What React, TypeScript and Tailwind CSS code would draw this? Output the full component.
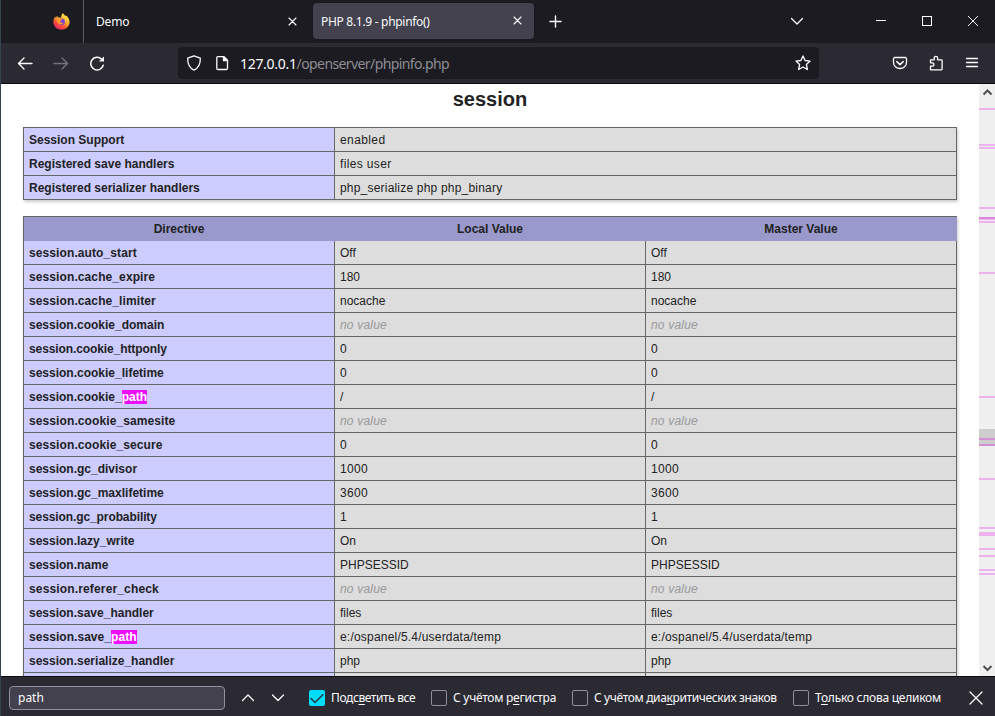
import type { ReactNode } from "react";

const uiFont = "font-['Noto_Sans','Open_Sans',sans-serif]";

const wide = "tracking-[0.2px]";
const tight = "tracking-[-0.1px]";
const slight = "tracking-[0.1px]";

const supportRows: [string, string, string, string][] = [
  ["Session Support", "enabled", "", "tracking-[0.4px]"],
  ["Registered save handlers", "files user", "", "tracking-[0.35px]"],
  ["Registered serializer handlers", "php_serialize php php_binary", "", wide],
];

const directives: [string, string | null, string, string][] = [
  ["session.auto_start", "Off", slight, ""],
  ["session.cache_expire", "180", slight, ""],
  ["session.cache_limiter", "nocache", slight, ""],
  ["session.cookie_domain", null, "", wide],
  ["session.cookie_httponly", "0", tight, ""],
  ["session.cookie_lifetime", "0", "", ""],
  ["session.cookie_path", "/", "", ""],
  ["session.cookie_samesite", null, slight, wide],
  ["session.cookie_secure", "0", slight, ""],
  ["session.gc_divisor", "1000", "", "tracking-[0.3px]"],
  ["session.gc_maxlifetime", "3600", "", "tracking-[0.3px]"],
  ["session.gc_probability", "1", tight, ""],
  ["session.lazy_write", "On", "", ""],
  ["session.name", "PHPSESSID", "", ""],
  ["session.referer_check", null, "tracking-[0.15px]", wide],
  ["session.save_handler", "files", "", ""],
  ["session.save_path", "e:/ospanel/5.4/userdata/temp", "tracking-[0.05px]", wide],
  ["session.serialize_handler", "php", "", ""],
];

// Top offset, height and colour of each search hit on the scrollbar track.
const hits = [
  { top: 24, h: 2, c: "#edb1ed" },
  { top: 60, h: 2, c: "#edb1ed" },
  { top: 63, h: 2, c: "#edb1ed" },
  { top: 123, h: 2, c: "#edb1ed" },
  { top: 133, h: 2, c: "#dc86dc" },
  { top: 135, h: 1, c: "#edb1ed" },
  { top: 137, h: 2, c: "#edb1ed" },
  { top: 188, h: 2, c: "#edb1ed" },
  { top: 312, h: 2, c: "#edb1ed" },
  { top: 354, h: 2, c: "#d38fd3" },
  { top: 360, h: 2, c: "#d38fd3" },
  { top: 394, h: 2, c: "#edb1ed" },
  { top: 443, h: 2, c: "#edb1ed" },
  { top: 448, h: 4, c: "#edb1ed" },
  { top: 464, h: 2, c: "#edb1ed" },
  { top: 471, h: 2, c: "#edb1ed" },
  { top: 485, h: 2, c: "#edb1ed" },
  { top: 489, h: 2, c: "#edb1ed" },
];

function Icon({ children, size = 16, className = "", w = 1.3 }: { children: ReactNode; size?: number; className?: string; w?: number }) {
  return (
    <svg width={size} height={size} viewBox={`0 0 ${size} ${size}`} fill="none" stroke="currentColor" strokeWidth={w} strokeLinecap="round" strokeLinejoin="round" className={`block shrink-0 ${className}`}>
      {children}
    </svg>
  );
}

function Firefox() {
  return (
    <svg width="17" height="17" viewBox="0 0 17 17" className="block shrink-0">
      <defs>
        <linearGradient id="flame" x1="0.85" y1="0.05" x2="0.25" y2="1">
          <stop offset="0" stopColor="#fff24a" />
          <stop offset="0.4" stopColor="#ffb02e" />
          <stop offset="0.7" stopColor="#ff5036" />
          <stop offset="1" stopColor="#e8246d" />
        </linearGradient>
      </defs>
      <path d="M9.700.3c1.500.9 2.200 2 2.500 3 .3-.2.4-.7.4-1.100C15 3.800 16.600 6.400 16.600 9c0 4.300-3.600 7.700-8.100 7.700S.4 13.300.4 9c0-2.300.8-4.300 2-5.500 0 .5.100.9.400 1.300.4-.8 1-1.500 1.700-1.900 0 .8.400 1.400 1 1.700 1.100-.2 2-.1 2.700.2C8 3.400 8.500 1.500 9.700.3z" fill="url(#flame)" />
      <circle cx="8.600" cy="8.700" r="3.300" fill="#7a43d4" />
      <path d="M3 5.800c1.500-.8 3.100-.6 4.300.3.700.2 1.600.3 2 .5-.2.800-1.500 1.100-2.100 1.500.1 1.600 1.500 2.300 3.200 1.500-.7 1.700-2.300 2.300-3.900 1.700C4.700 10.600 4 9 4.200 7.600z" fill="#ff9a30" />
    </svg>
  );
}

const Cross = ({ s }: { s: number }) => <path d={`M1 1 L${s - 1} ${s - 1} M${s - 1} 1 L1 ${s - 1}`} />;

function TabStrip() {
  return (
    <div className="flex h-[43px] w-full shrink-0 items-center bg-[#1c1b22]">
      <div className="flex h-full w-[83px] shrink-0 items-center justify-end border-r border-[#5b5a63] pr-[13px]"><Firefox /></div>
      <div className="flex w-[229px] shrink-0 items-center justify-between pr-4 pl-3 text-xs">
        <span className="tracking-[-0.2px]">Demo</span>
        <Icon size={9} w={1.1}><Cross s={9} /></Icon>
      </div>
      <div className="mt-[-2px] flex h-9 w-[221px] shrink-0 items-center justify-between rounded bg-[#42414d] pr-3 pl-2 text-xs shadow-[0_0_2px_#0006]">
        <span className="pt-[3px] tracking-[-0.3px] whitespace-nowrap">PHP 8.1.9 - phpinfo()</span>
        <Icon size={9} w={1.1}><Cross s={9} /></Icon>
      </div>
      <Icon size={13} w={1.4} className="ml-[15px]"><path d="M6.500 1v11M1 6.500h11" /></Icon>
      <div className="flex-1" />
      <Icon size={14} w={1.3} className="mt-[-2px] mr-[72px]"><path d="M1.500 4.500 7 10l5.500-5.500" /></Icon>
      <div className="mt-[-2px] mr-[36px] h-px w-[10px] bg-white" />
      <div className="mt-[-1px] mr-[36px] h-[10px] w-[10px] border border-white" />
      <Icon size={10} w={1} className="mt-[-1px] mr-[17px]"><path d="M0 0 10 10M10 0 0 10" /></Icon>
    </div>
  );
}

function NavBar() {
  return (
    <div className="flex h-[41px] w-full shrink-0 items-center border-b border-[#0c0c0d] bg-[#2b2a33] pl-4">
      <Icon w={1.4}><path d="M15 8.500H1.500M7 3 1.500 8.500 7 14" /></Icon>
      <Icon w={1.4} className="ml-5 text-[#74737b]"><path d="M1 8.500h13.500M9 3l5.500 5.500L9 14" /></Icon>
      <Icon w={1.5} className="ml-5">
        <path d="M14.200 10.200A6.300 6.300 0 1 1 12.600 4.200" />
        <path d="M15 1.600v5H10z" fill="currentColor" stroke="none" />
      </Icon>
      <div className="ml-[73px] flex h-8 w-[641px] shrink-0 items-center rounded bg-[#1c1b22] pr-[8px] pl-[8px]">
        <Icon><path d="M8 .8 14.300 3.100c.3 5.900-1.900 9.800-6.300 12.100C3.600 12.900 1.400 9 1.700 3.100z" /></Icon>
        <Icon className="ml-3">
          <path d="M4 1.700h6L13.500 5.200v8.100a1.200 1.200 0 0 1-1.200 1.200H4a1.200 1.200 0 0 1-1.200-1.200V2.900A1.200 1.200 0 0 1 4 1.700z" />
          <path d="M9.500 1.700v4h4z" fill="currentColor" />
        </Icon>
        <span className="ml-[10px] flex-1 pt-px text-[14px] tracking-[-0.3px] whitespace-nowrap">127.0.0.1<span className="tracking-[-0.6px] text-[#8d8d93]">/openserver/phpinfo.php</span></span>
        <Icon><path d="m8 .9 2.100 4.600 5 .6-3.700 3.400 1 5L8 12l-4.400 2.500 1-5L.9 6.100l5-.6z" /></Icon>
      </div>
      <div className="flex-1" />
      <Icon className="mr-5"><path d="M3 2.500h10.200a1.300 1.300 0 0 1 1.300 1.300V7.500a6.500 6 0 0 1-13 0V3.800A1.300 1.300 0 0 1 2.800 2.500z" /><path d="M4.800 6.600 8 9.600l3.200-3" strokeWidth="1.5" /></Icon>
      <Icon className="mr-5">
        <path d="M2.500 14.800v-3.600H4.200a1.700 1.700 0 0 0 0-3.400H2.500V4.800h3.700V3a1.700 1.700 0 0 1 3.400 0v1.800h3.700a.8.8 0 0 1 .8.800v8.400a.8.8 0 0 1-.8.8z" />
      </Icon>
      <Icon className="mr-[15px]"><path d="M2.500 3.500h11M2.500 7.500h11M2.500 11.500h11" /></Icon>
    </div>
  );
}

function Name({ text }: { text: string }) {
  if (!text.endsWith("path")) return <>{text}</>;
  return <>{text.slice(0, -4)}<span className="bg-[#ef0fff] text-white">path</span></>;
}

function Value({ text }: { text: string | null }) {
  return text === null ? <i className="text-[#999]">no value</i> : <>{text}</>;
}

const cell = "flex h-6 items-center border-r border-b border-[#666] pt-px pl-[5px] whitespace-nowrap";

function PhpInfo() {
  return (
    <div className="h-full min-w-0 flex-1 overflow-hidden bg-white pl-[22px] font-['Liberation_Sans',Arial,sans-serif] text-xs text-[#222]">
      <h2 className="w-[934px] pt-[3px] text-center text-[20px] leading-6 font-bold">session</h2>
      <div className="mt-4 w-[934px] border-t border-l border-[#666] shadow-[1px_2px_3px_#ccc]">
        {supportRows.map(([k, v, kt, vt]) => (
          <div key={k} className="grid grid-cols-[311px_622px]">
            <div className={`${cell} bg-[#ccf] font-bold ${kt}`}>{k}</div>
            <div className={`${cell} bg-[#ddd] ${vt}`}>{v}</div>
          </div>
        ))}
      </div>
      <div className="mt-4 w-[934px] border-t border-l border-[#666] shadow-[1px_2px_3px_#ccc]">
        <div className="grid h-6 grid-cols-[310px_312px_310px] items-center bg-[#99c] text-center font-bold">
          <div>Directive</div><div>Local Value</div><div>Master Value</div>
        </div>
        {directives.map(([k, v, kt, vt]) => (
          <div key={k} className="grid grid-cols-[311px_311px_311px]">
            <div className={`${cell} bg-[#ccf] font-bold ${kt}`}><span><Name text={k} /></span></div>
            <div className={`${cell} bg-[#ddd] ${vt}`}><Value text={v} /></div>
            <div className={`${cell} bg-[#ddd] ${vt}`}><Value text={v} /></div>
          </div>
        ))}
        <div className="grid grid-cols-[311px_311px_311px]">
          <div className={`${cell} bg-[#ccf]`} />
          <div className={`${cell} bg-[#ddd]`} />
          <div className={`${cell} bg-[#ddd]`} />
        </div>
      </div>
    </div>
  );
}

function Scrollbar() {
  return (
    <div className="relative flex h-full w-4 shrink-0 flex-col justify-between bg-[#f0f0f0] text-[#505050]">
      <Icon size={16} w={2}><path d="M4.500 10.500 8.500 6.500l4 4" strokeLinecap="butt" strokeLinejoin="miter" /></Icon>
      <div className="absolute top-[345px] h-[17px] w-4 bg-[#cdcdcd]" />
      {hits.map((m) => (
        <div key={m.top} className="absolute w-4" style={{ top: m.top, height: m.h, backgroundColor: m.c }} />
      ))}
      <Icon size={16} w={2}><path d="m4.500 6 4 4 4-4" strokeLinecap="butt" strokeLinejoin="miter" /></Icon>
    </div>
  );
}

function Option({ a, u, b, width, checked = false, tracking }: { a: string; u: string; b: string; width: string; checked?: boolean; tracking: string }) {
  return (
    <div className={`flex shrink-0 items-center gap-[6px] ${width}`}>
      {checked ? (
        <div className="h-4 w-4 shrink-0 rounded-[2px] bg-[#00ddff] text-[#2b2a33]"><Icon w={1.3}><path d="m2 8.500 4 4L14 4.500" /></Icon></div>
      ) : (
        <div className="h-4 w-4 shrink-0 rounded-[2px] border border-[#8f8f9d]" />
      )}
      <span className={`pt-px text-xs whitespace-nowrap ${tracking}`}>{a}<span className="underline underline-offset-2">{u}</span>{b}</span>
    </div>
  );
}

function FindBar() {
  return (
    <div className="flex h-[41px] w-full shrink-0 items-center border-t border-[#0c0c0d] bg-[#2b2a33] pt-px pl-2">
      <div className="flex h-6 w-[216px] shrink-0 items-center rounded border border-[#8f8f9d] bg-[#42414d] pt-px pl-[8px] text-xs">path</div>
      <Icon className="ml-[15px]"><path d="m2.500 10.500 5.500-5.500 5.500 5.500" /></Icon>
      <Icon className="ml-[14px]"><path d="M2.500 5 8 10.500 13.500 5" /></Icon>
      <div className="w-[23px] shrink-0" />
      <Option a="Подс" u="в" b="етить все" width="w-[122px]" checked tracking="tracking-[-0.4px]" />
      <Option a="С учётом р" u="е" b="гистра" width="w-[141px]" tracking="tracking-[-0.26px]" />
      <Option a="С учётом диа" u="к" b="ритических знаков" width="w-[221px]" tracking="tracking-[-0.36px]" />
      <Option a="Т" u="о" b="лько слова целиком" width="w-[176px]" tracking="tracking-[-0.25px]" />
      <Icon size={14}><Cross s={14} /></Icon>
    </div>
  );
}

export default function App() {
  return (
    <div className={`flex h-[716px] w-[995px] flex-col overflow-hidden border-l border-[#2f464e] text-[#fbfbfe] ${uiFont}`}>
      <TabStrip />
      <NavBar />
      <div className="flex h-[592px] shrink-0">
        <PhpInfo />
        <Scrollbar />
      </div>
      <FindBar />
    </div>
  );
}
